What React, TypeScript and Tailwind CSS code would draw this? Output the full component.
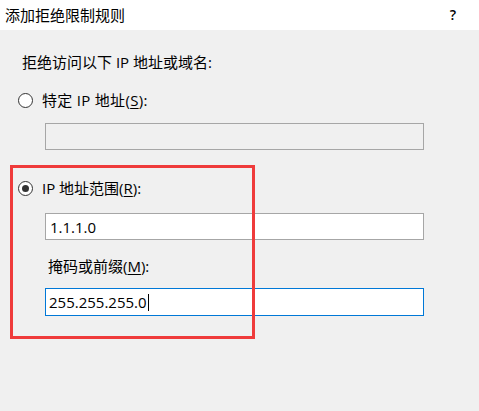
export default function App() {
  const font = {
    fontFamily: '"Open Sans", "Noto Sans CJK SC", sans-serif',
  };

  return (
    <div
      className="relative w-[479px] h-[411px] overflow-hidden bg-[#f0f0f0] text-[15px] leading-[20px] text-black"
      style={font}
    >
      {/* Title bar */}
      <div className="flex h-[30px] items-center justify-between bg-white pl-[5px] pr-[23px]">
        <span>添加拒绝限制规则</span>
        <span className="text-[14px] font-semibold">?</span>
      </div>

      <div className="flex flex-col pl-[18px] pr-[55px] pt-[22px]">
        <div className="pl-[4px]">拒绝访问以下 IP 地址或域名:</div>

        {/* Specific IP */}
        <label className="mt-[18px] flex h-[20px] items-center gap-[9px]">
          <span className="h-[15px] w-[15px] rounded-full border border-[#333] bg-white" />
          <span className="tracking-[0.3px]">
            特定 IP 地址(<span className="underline underline-offset-2">S</span>):
          </span>
        </label>
        <div className="ml-[27px] mt-[13px] h-[27px] border border-[#a6a6a6] bg-[#f0f0f0]" />

        {/* IP range */}
        <label className="mt-[28px] flex h-[20px] items-center gap-[9px]">
          <span className="flex h-[15px] w-[15px] items-center justify-center rounded-full border border-[#333] bg-white">
            <span className="h-[7px] w-[7px] rounded-full bg-[#333]" />
          </span>
          <span>
            IP 地址范围(<span className="underline underline-offset-2">R</span>):
          </span>
        </label>
        <div className="ml-[27px] mt-[15px] flex h-[27px] items-center border border-[#a6a6a6] bg-white pl-[4px]">
          1.1.1.0
        </div>

        <div className="ml-[30px] mt-[16px]">
          掩码或前缀(<span className="underline underline-offset-2">M</span>):
        </div>
        <div className="ml-[27px] mt-[12px] flex h-[28px] items-center border border-[#0078d7] bg-white pl-[3px]">
          255.255.255.0
          <span className="ml-[1px] h-[17px] w-px bg-black" />
        </div>
      </div>

      {/* Annotation box */}
      <div className="pointer-events-none absolute left-[10px] top-[165px] h-[174px] w-[245px] border-[3px] border-[#ef3b3b]" />
    </div>
  );
}
